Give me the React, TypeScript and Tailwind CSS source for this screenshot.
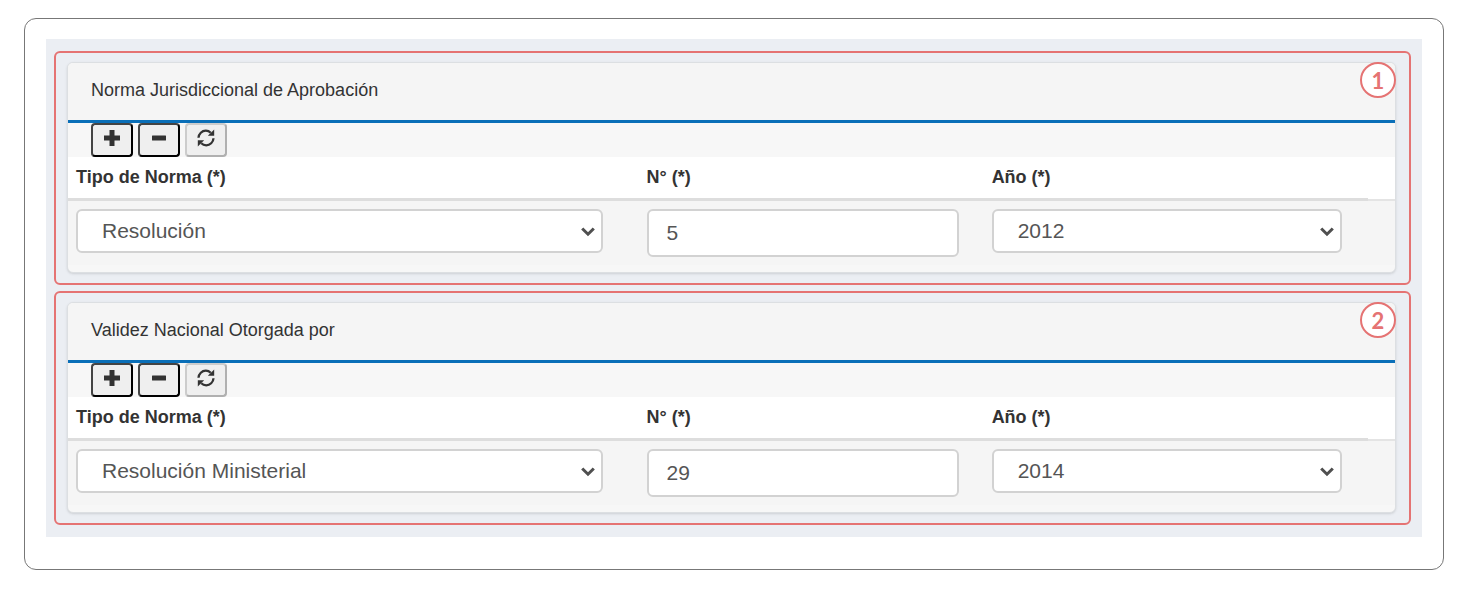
import type { ReactNode } from 'react'

type Norma = {
  id: string
  title: string
  tipo: string
  numero: string
  anio: string
}

const normas: Norma[] = [
  { id: 'aprobacion', title: 'Norma Jurisdiccional de Aprobación', tipo: 'Resolución', numero: '5', anio: '2012' },
  { id: 'validez', title: 'Validez Nacional Otorgada por', tipo: 'Resolución Ministerial', numero: '29', anio: '2014' },
]

const tipos = ['Resolución', 'Resolución Ministerial']
const anios = ['2012', '2013', '2014']

function PlusIcon() {
  return (
    <svg viewBox="0 0 18 18" className="w-[18px] h-[18px]" fill="#333" aria-hidden="true">
      <path d="M6.500 1h5v5.500H17v5h-5.500V17h-5v-5.500H1v-5h5.500z" />
    </svg>
  )
}

function MinusIcon() {
  return (
    <svg viewBox="0 0 18 18" className="w-[18px] h-[18px]" fill="#333" aria-hidden="true">
      <rect x="2" y="6.500" width="14" height="5" rx="0.500" />
    </svg>
  )
}

function RefreshIcon() {
  return (
    <svg viewBox="0 0 18 18" className="w-[18px] h-[18px]" aria-hidden="true">
      <path d="M1.500 8.800C1.700 4.800 5 1.700 8.800 1.700c1.900 0 3.600.7 4.900 2" fill="none" stroke="#333" strokeWidth="2.300" />
      <path d="M17.200.5v6.300h-6.400z" fill="#333" />
      <path d="M16.500 9.200c-.2 4-3.500 7.100-7.300 7.100-1.900 0-3.600-.7-4.900-2" fill="none" stroke="#333" strokeWidth="2.300" />
      <path d="M.8 17.500v-6.300h6.400z" fill="#333" />
    </svg>
  )
}

function ToolButton({ label, disabled, children }: { label: string; disabled?: boolean; children: ReactNode }) {
  return (
    <button
      type="button"
      aria-label={label}
      disabled={disabled}
      className={`flex justify-center w-[42px] h-[34px] pt-1 rounded border-[2px] bg-[#efefef] ${
        disabled
          ? 'border-t-[#cccccc] border-l-[#cccccc] border-b-[#b0b0b0] border-r-[#b0b0b0]'
          : 'border-t-[#444] border-l-[#444] border-b-black border-r-black'
      }`}
    >
      {children}
    </button>
  )
}

function SelectField({ label, value, options }: { label: string; value: string; options: string[] }) {
  return (
    <div className="relative w-[95%]">
      <select
        aria-label={label}
        defaultValue={value}
        className="block w-full h-11 pl-6 pr-10 appearance-none rounded-md border-2 border-[#d2d2d2] bg-white text-[21px] text-[#555]"
      >
        {options.map((o) => (
          <option key={o}>{o}</option>
        ))}
      </select>
      <svg viewBox="0 0 14 10" className="absolute right-2 top-[18px] w-[14px] h-[10px] pointer-events-none" aria-hidden="true">
        <path d="M1.200 1.500 7 7.200l5.800-5.700" fill="none" stroke="#505050" strokeWidth="3" />
      </svg>
    </div>
  )
}

function NormaPanel({ norma, number }: { norma: Norma; number: number }) {
  return (
    <section className="relative pl-[11px] pr-[13px] pt-[9px] pb-[10px] rounded-md border-2 border-[#e57373]">
      <div className="overflow-hidden rounded-md border border-[#dcdfe2] bg-[#f7f7f7] shadow-sm">
        <h2 className="px-[23px] pt-[15px] pb-[17px] border-b-[3px] border-[#0a6fb8] bg-[#f5f5f5] text-lg leading-[25px] text-[#333]">
          {norma.title}
        </h2>
        <div className="flex gap-[5px] pl-[23px]">
          <ToolButton label="Agregar"><PlusIcon /></ToolButton>
          <ToolButton label="Quitar"><MinusIcon /></ToolButton>
          <ToolButton label="Actualizar" disabled><RefreshIcon /></ToolButton>
        </div>
        <table className="w-full table-fixed text-left">
          <thead className="bg-white text-lg leading-6 text-[#333]">
            <tr className="align-top">
              <th className="w-[43%] px-2 pt-2 pb-[9px] border-b-[3px] border-[#dddddd]">Tipo de Norma (*)</th>
              <th className="w-[26%] px-2 pt-2 pb-[9px] border-b-[3px] border-[#dddddd]">N° (*)</th>
              <th className="w-[29%] px-2 pt-2 pb-[9px] border-b-[3px] border-[#dddddd]">Año (*)</th>
              <td className="w-[2%] border-b-2 border-[#e4e4e4]"></td>
            </tr>
          </thead>
          <tbody className="bg-[#f5f5f5]">
            <tr className="align-top">
              <td className="p-2">
                <SelectField label="Tipo de Norma" value={norma.tipo} options={tipos} />
              </td>
              <td className="p-2">
                <input
                  type="text"
                  aria-label="N°"
                  id={`${norma.id}-numero`}
                  defaultValue={norma.numero}
                  className="block w-[95%] h-12 px-[18px] rounded-md border-2 border-[#d2d2d2] bg-white text-[21px] text-[#555]"
                />
              </td>
              <td className="p-2">
                <SelectField label="Año" value={norma.anio} options={anios} />
              </td>
              <td></td>
            </tr>
          </tbody>
        </table>
        <div className="h-[7px]"></div>
      </div>
      <span className="absolute top-[9px] right-[13px] flex items-center justify-center w-9 h-9 rounded-full border-2 border-[#e57373] bg-white font-['Lato',sans-serif] text-[22px] font-bold text-[#e57373]">
        {number}
      </span>
    </section>
  )
}

export default function App() {
  return (
    <div className="pt-[18px] pb-[19px] pl-6 pr-4 bg-white font-['Liberation_Sans',Arial,sans-serif]">
      <div className="px-[21px] pt-5 pb-8 rounded-xl border border-[#777]">
        <main className="flex flex-col gap-[6px] pt-3 pb-3 pl-2 pr-[11px] bg-[#ebeef3]">
          {normas.map((norma, i) => (
            <NormaPanel key={norma.id} norma={norma} number={i + 1} />
          ))}
        </main>
      </div>
    </div>
  )
}
